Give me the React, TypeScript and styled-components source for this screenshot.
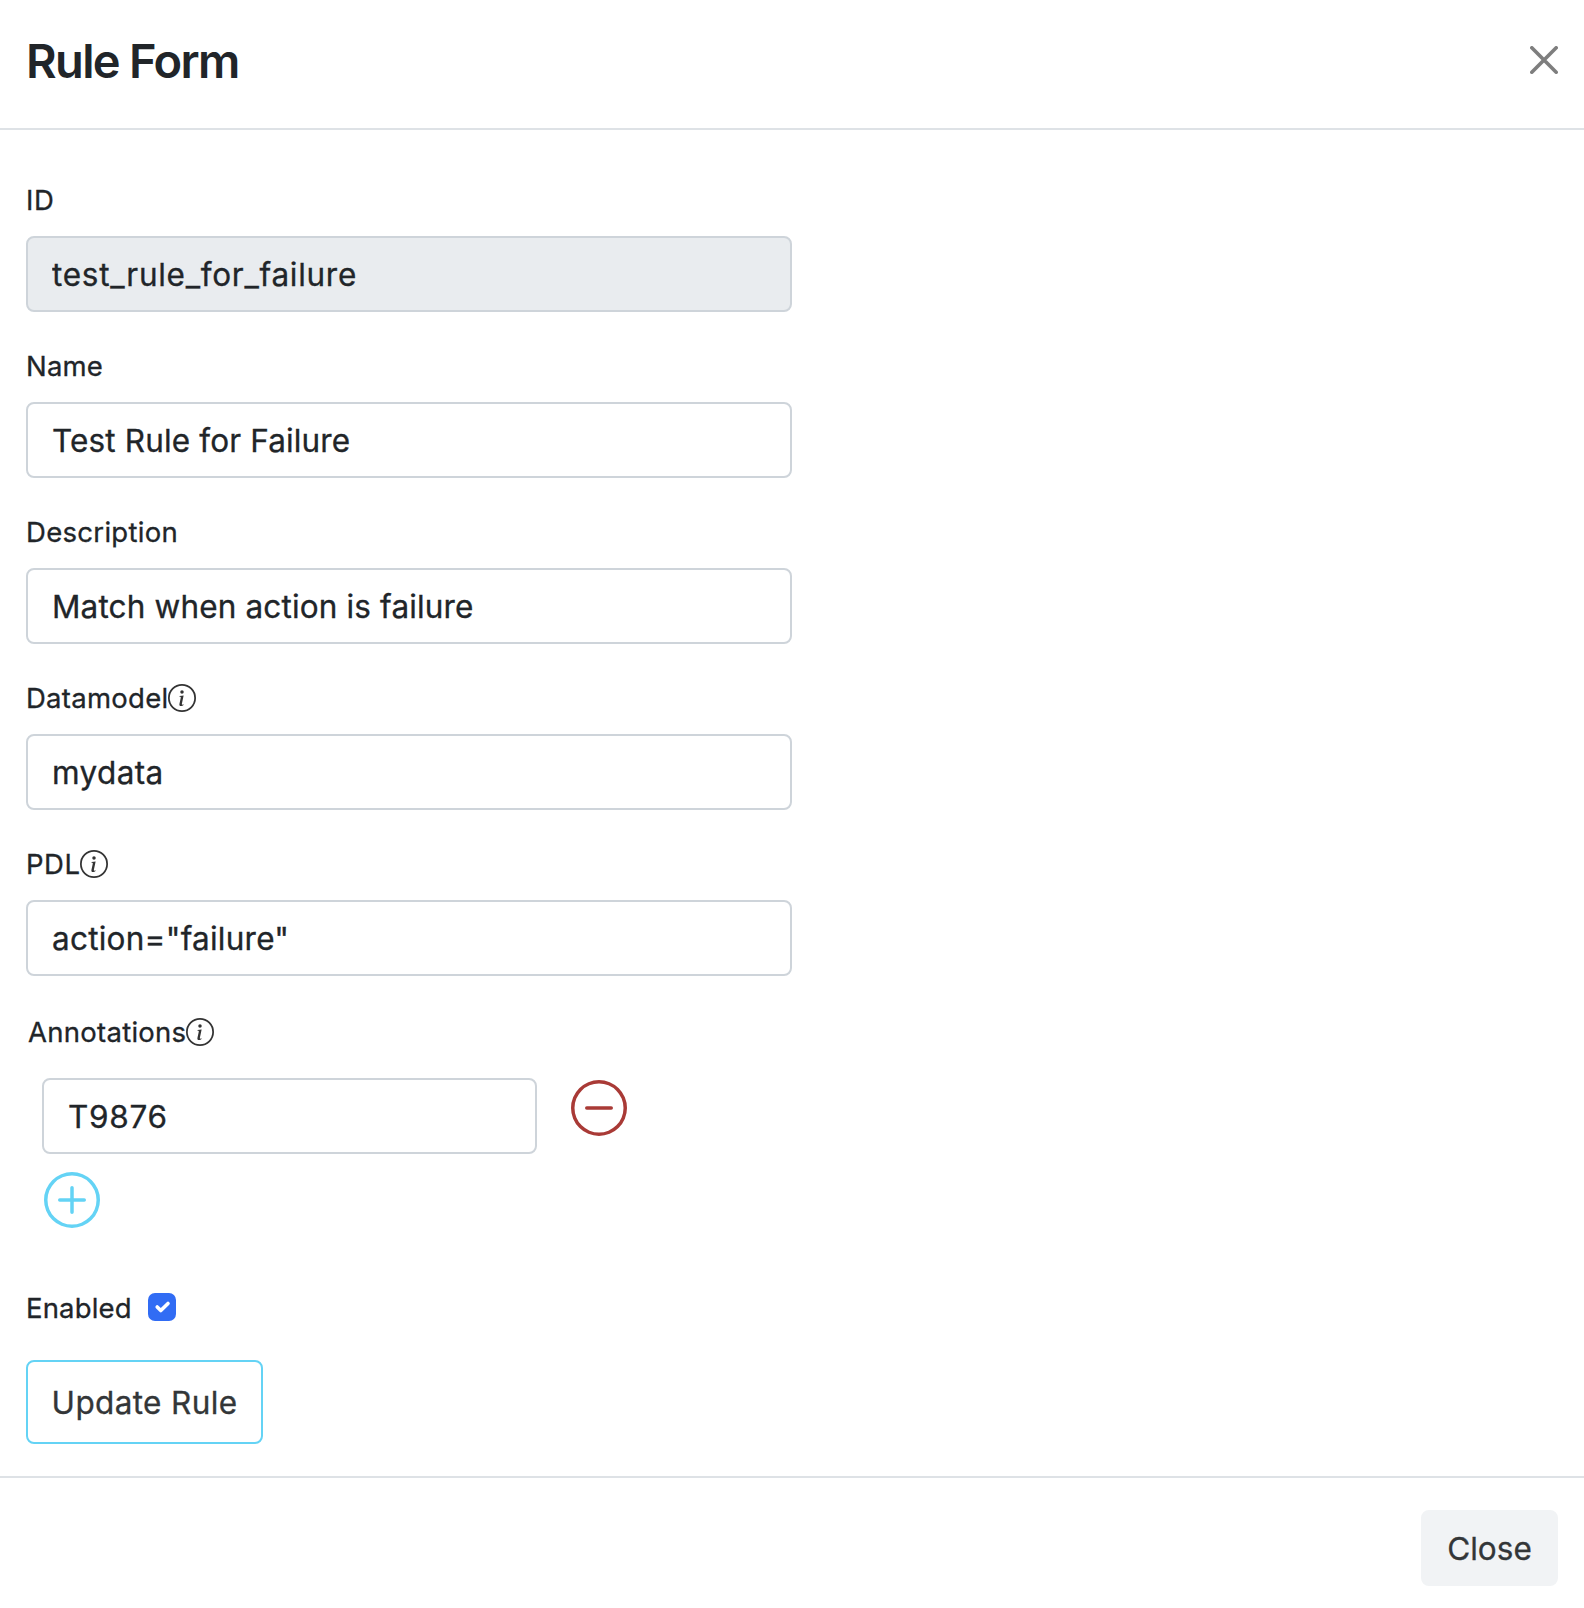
import React, { useState } from "react";
import styled, { createGlobalStyle } from "styled-components";

const GlobalStyle = createGlobalStyle`
  * { box-sizing: border-box; }
  body {
    margin: 0;
    background: #fff;
    color: #212529;
    font-family: Inter, "Liberation Sans", sans-serif;
    font-weight: 400;
    -webkit-text-stroke-width: 0.3px;
  }
`;

const Modal = styled.div`
  display: flex;
  flex-direction: column;
  width: 100%;
  height: 1608px;
  background: #fff;
`;

const Header = styled.header`
  display: flex;
  align-items: center;
  justify-content: space-between;
  height: 130px;
  padding: 0 26px 8px 26px;
  border-bottom: 2px solid #dee2e6;
`;

const Title = styled.h4`
  margin: 1px 0 0;
  font-size: 47px;
  line-height: 60px;
  font-weight: 600;
  letter-spacing: -1.65px;
  -webkit-text-stroke-width: 0;
`;

const DismissButton = styled.button`
  display: flex;
  padding: 0;
  border: 0;
  background: none;
  color: #000;
  opacity: 0.5;
`;

const Body = styled.form`
  display: flex;
  flex-direction: column;
  align-items: flex-start;
  padding: 49px 26px 32px;
`;

const Field = styled.div`
  display: flex;
  flex-direction: column;
  width: 766px;
  margin-bottom: 33px;
`;

const Label = styled.label<{ $tracking?: number }>`
  display: flex;
  align-items: center;
  height: 42px;
  font-size: 27.5px;
  line-height: 42px;
  letter-spacing: ${(p) => p.$tracking ?? 0.3}px;
`;

const InfoMark = styled.span`
  display: flex;
  color: #333;
`;

const TextInput = styled.input<{ $tracking?: number }>`
  width: 100%;
  height: 76px;
  padding: 1px 24px 0;
  border: 2px solid #ced4da;
  border-radius: 8px;
  background: #fff;
  color: #212529;
  font-family: inherit;
  font-size: 31.5px;
  font-weight: inherit;
  letter-spacing: ${(p) => p.$tracking ?? 0.15}px;
  outline: none;

  &:disabled {
    background: #e9ecef;
    opacity: 1;
  }
`;

const FieldInput = styled(TextInput)`
  margin-top: 15px;
`;

const AnnotationGroup = styled.section`
  display: flex;
  flex-direction: column;
  align-items: flex-start;
  margin: 2px 0 59px;
`;

const AnnotationLabel = styled(Label)`
  margin: 0 0 25px 2px;
`;

const AnnotationRow = styled.div`
  display: flex;
  align-items: flex-start;
  gap: 34px;
  width: 585px;
  margin: 0 0 18px 16px;
`;

const RoundButton = styled.button<{ $color: string }>`
  display: flex;
  flex: none;
  padding: 0;
  border: 0;
  background: none;
  color: ${(p) => p.$color};
`;

const AddButton = styled(RoundButton)`
  margin-left: 18px;
`;

const RemoveButton = styled(RoundButton)`
  margin-top: 2px;
`;

const EnabledRow = styled.div`
  display: flex;
  align-items: center;
  height: 42px;
  margin-bottom: 31px;
`;

const Checkbox = styled.button<{ $on: boolean }>`
  display: flex;
  width: 28px;
  height: 28px;
  margin: -2px 0 0 16px;
  padding: 0;
  border: 2px solid ${(p) => (p.$on ? "#316cf4" : "#bfbfbf")};
  border-radius: 7px;
  background: ${(p) => (p.$on ? "#316cf4" : "#fff")};
`;

const ActionButton = styled.button<{ $width: number; $height: number; $tracking: number; $border: string; $fill: string }>`
  width: ${(p) => p.$width}px;
  height: ${(p) => p.$height}px;
  padding: 0;
  border: 2px solid ${(p) => p.$border};
  border-radius: 8px;
  background: ${(p) => p.$fill};
  color: #333638;
  font-family: inherit;
  font-size: 31.5px;
  font-weight: inherit;
  letter-spacing: ${(p) => p.$tracking}px;
`;

const Footer = styled.footer`
  display: flex;
  justify-content: flex-end;
  padding: 32px 26px 22px;
  border-top: 2px solid #dee2e6;
`;

const CIRCLE = "M8 15A7 7 0 1 1 8 1a7 7 0 0 1 0 14m0 1A8 8 0 1 0 8 0a8 8 0 0 0 0 16";

function InfoIcon() {
  return (
    <InfoMark>
      <svg width="28" height="28" viewBox="0 0 16 16" fill="currentColor">
        <path d={CIRCLE} />
        <path d="m8.930 6.588-2.290.287-.082.380.450.083c.294.070.352.176.288.469l-.738 3.468c-.194.897.105 1.319.808 1.319.545 0 1.178-.252 1.465-.598l.088-.416c-.2.176-.492.246-.686.246-.275 0-.375-.193-.304-.533zM9 4.500a1 1 0 1 1-2 0 1 1 0 0 1 2 0" />
      </svg>
    </InfoMark>
  );
}

function SignIcon({ plus }: { plus?: boolean }) {
  return (
    <svg width="56" height="56" viewBox="0 0 16 16" fill="currentColor">
      <path d={CIRCLE} />
      <path
        d={
          plus
            ? "M8 4a.5.5 0 0 1 .5.5v3h3a.5.5 0 0 1 0 1h-3v3a.5.5 0 0 1-1 0v-3h-3a.5.5 0 0 1 0-1h3v-3A.5.5 0 0 1 8 4"
            : "M4 8a.5.5 0 0 1 .5-.5h7a.5.5 0 0 1 0 1h-7A.5.5 0 0 1 4 8"
        }
      />
    </svg>
  );
}

type FieldSpec = {
  name: string;
  label: string;
  value: string;
  labelTracking: number;
  valueTracking: number;
  info?: boolean;
  disabled?: boolean;
};

const FIELDS: FieldSpec[] = [
  { name: "id", label: "ID", value: "test_rule_for_failure", labelTracking: 0.7, valueTracking: 0.72, disabled: true },
  { name: "name", label: "Name", value: "Test Rule for Failure", labelTracking: 0.17, valueTracking: 0.15 },
  { name: "description", label: "Description", value: "Match when action is failure", labelTracking: 0.3, valueTracking: 0.15 },
  { name: "datamodel", label: "Datamodel", value: "mydata", labelTracking: 0.27, valueTracking: 0.38, info: true },
  { name: "pdl", label: "PDL", value: 'action="failure"', labelTracking: 0.5, valueTracking: 0.25, info: true },
];

export default function App() {
  const [enabled, setEnabled] = useState(true);
  return (
    <>
      <GlobalStyle />
      <Modal>
        <Header>
          <Title>Rule Form</Title>
          <DismissButton type="button" aria-label="Close">
            <svg width="28" height="28" viewBox="0.293 0.293 15.414 15.414" fill="none" stroke="currentColor" strokeWidth="2" strokeLinecap="round">
              <path d="M1.293 1.293 14.707 14.707M14.707 1.293 1.293 14.707" />
            </svg>
          </DismissButton>
        </Header>
        <Body>
          {FIELDS.map((f) => (
            <Field key={f.name}>
              <Label htmlFor={f.name} $tracking={f.labelTracking}>
                {f.label}
                {f.info && <InfoIcon />}
              </Label>
              <FieldInput id={f.name} defaultValue={f.value} disabled={f.disabled} $tracking={f.valueTracking} />
            </Field>
          ))}
          <AnnotationGroup>
            <AnnotationLabel $tracking={0.27}>
              Annotations
              <InfoIcon />
            </AnnotationLabel>
            <AnnotationRow>
              <TextInput defaultValue="T9876" $tracking={0.7} />
              <RemoveButton type="button" $color="#a93a36" aria-label="Remove annotation">
                <SignIcon />
              </RemoveButton>
            </AnnotationRow>
            <AddButton type="button" $color="#64d3f5" aria-label="Add annotation">
              <SignIcon plus />
            </AddButton>
          </AnnotationGroup>
          <EnabledRow>
            <Label $tracking={0.17}>Enabled</Label>
            <Checkbox type="button" role="checkbox" aria-checked={enabled} $on={enabled} onClick={() => setEnabled(!enabled)}>
              {enabled && (
                <svg width="24" height="24" viewBox="0 0 20 20" fill="none" stroke="#fff" strokeWidth="3" strokeLinecap="round" strokeLinejoin="round">
                  <path d="m6 10 3 3 6-6" />
                </svg>
              )}
            </Checkbox>
          </EnabledRow>
          <ActionButton type="button" $width={237} $height={84} $tracking={0.36} $border="#64d3f5" $fill="#fff">
            Update Rule
          </ActionButton>
        </Body>
        <Footer>
          <ActionButton type="button" $width={137} $height={76} $tracking={0} $border="#f1f3f5" $fill="#f1f3f5">
            Close
          </ActionButton>
        </Footer>
      </Modal>
    </>
  );
}
